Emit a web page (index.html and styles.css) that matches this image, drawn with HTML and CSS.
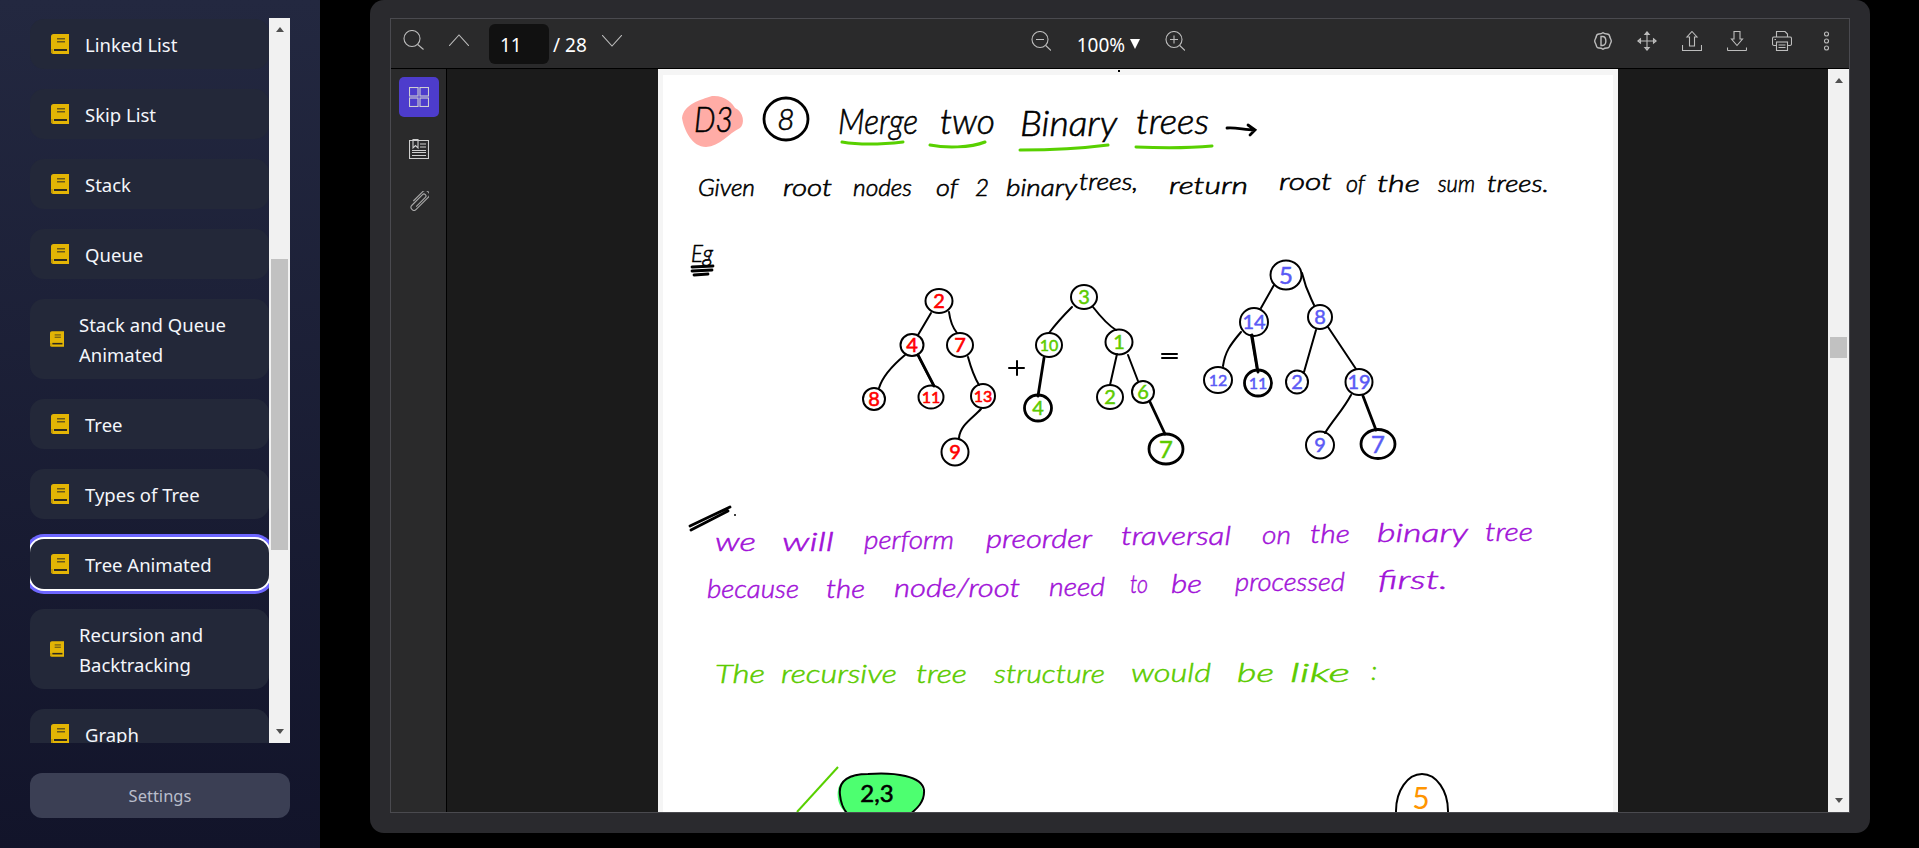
FILE: index.html
```html
<!DOCTYPE html>
<html lang="en">
<head>
<meta charset="utf-8">
<title>Notes</title>
<link rel="stylesheet" href="styles.css">
</head>
<body>
<svg class="defs" width="0" height="0" aria-hidden="true">
  <symbol id="book" viewBox="0 0 18 20">
    <path fill="#e3b505" d="M2.500 0H18V20H2.500C1 20 0 19 0 17.500V2.500C0 1 1 0 2.500 0Z"/>
    <path fill="#c49a05" d="M0 15H2V20H2.500C1 20 0 19 0 17.500Z"/>
    <rect x="6" y="4" width="8" height="1.500" fill="#6b5a1c"/>
    <rect x="6" y="7" width="8" height="1.500" fill="#6b5a1c"/>
    <rect x="3" y="15" width="13" height="2" fill="#2d2a22"/>
  </symbol>
</svg>
<aside class="sidebar">
  <div class="list-wrap">
    <nav class="topics">
      <a class="topic"><svg class="book"><use href="#book"/></svg><span>Linked List</span></a>
      <a class="topic"><svg class="book"><use href="#book"/></svg><span>Skip List</span></a>
      <a class="topic"><svg class="book"><use href="#book"/></svg><span>Stack</span></a>
      <a class="topic"><svg class="book"><use href="#book"/></svg><span>Queue</span></a>
      <a class="topic topic-long"><svg class="book"><use href="#book"/></svg><span>Stack and Queue Animated</span></a>
      <a class="topic"><svg class="book"><use href="#book"/></svg><span>Tree</span></a>
      <a class="topic"><svg class="book"><use href="#book"/></svg><span>Types of Tree</span></a>
      <a class="topic topic-active"><svg class="book"><use href="#book"/></svg><span>Tree Animated</span></a>
      <a class="topic topic-long"><svg class="book"><use href="#book"/></svg><span>Recursion and Backtracking</span></a>
      <a class="topic"><svg class="book"><use href="#book"/></svg><span>Graph</span></a>
    </nav>
    <div class="scrollbar side-scroll">
      <i class="arrow-up"></i>
      <div class="track"><div class="thumb side-thumb"></div></div>
      <i class="arrow-down"></i>
    </div>
  </div>
  <button class="settings">Settings</button>
</aside>
<main class="main">
  <section class="panel">
    <div class="pdf">
      <header class="toolbar">
        <div class="tool-group">
          <svg class="ico ico-search" viewBox="0 0 21 20"><circle cx="9" cy="8.500" r="8"/><path d="M14.700 14.500L20.500 19.500"/></svg>
          <svg class="ico ico-chev" viewBox="0 0 20 12"><path d="M0 12L10 1L20 12"/></svg>
          <div class="page-input">11</div>
          <span class="page-total">/ 28</span>
          <svg class="ico ico-chev ico-chev-down" viewBox="0 0 20 12"><path d="M0 0L10 11L20 0"/></svg>
        </div>
        <div class="tool-group zoom-group">
          <svg class="ico ico-zoom" viewBox="0 0 20 20"><circle cx="9" cy="8.500" r="8"/><path d="M14.700 14.500L20 19.500M5 8.500H13"/></svg>
          <span class="zoom-value">100%<i class="caret"></i></span>
          <svg class="ico ico-zoom" viewBox="0 0 20 20"><circle cx="9" cy="8.500" r="8"/><path d="M14.700 14.500L20 19.500M5 8.500H13M9 4.500V12.500"/></svg>
        </div>
        <div class="tool-group tools-right">
          <svg class="ico ico-mode" viewBox="0 0 18 18"><path d="M9 .7C10.500 2 11.500 2 13 2C14.500 2 15.500 3 15.700 4.500C16 6 17.300 7.500 17.300 9C17.300 10.500 16 12 15.700 13.500C15.500 15 14.500 16 13 16C11.500 16 10.500 16 9 17.300C7.500 16 6.500 16 5 16C3.500 16 2.500 15 2.300 13.500C2 12 .7 10.500 .7 9C.7 7.500 2 6 2.300 4.500C2.500 3 3.500 2 5 2C6.500 2 7.500 2 9 .7Z"/><path d="M7 4.500H8.500C13 4.500 13 13.500 8.500 13.500H7Z"/></svg>
          <svg class="ico ico-tool" viewBox="0 0 20 20"><path d="M10 1V19M1 10H19M7.800 3.500L10 .8L12.200 3.500ZM7.800 16.500L10 19.200L12.200 16.500ZM3.500 7.800L.8 10L3.500 12.200ZM16.500 7.800L19.200 10L16.500 12.200Z"/></svg>
          <svg class="ico ico-tool" viewBox="0 0 20 20"><path d="M10 .5L15 6H12.500V15H7.500V6H5Z"/><path d="M.5 14V19.500H19.500V14"/></svg>
          <svg class="ico ico-tool" viewBox="0 0 20 20"><path d="M7 .5H13V8H15.500L10 14.500L4.500 8H7Z"/><path d="M.5 19.500H19.500M.5 16.500V19.500M19.500 16.500V19.500"/></svg>
          <svg class="ico ico-tool" viewBox="0 0 20 20"><path d="M4.500 6V.5H13L15.500 3V6"/><rect x=".5" y="6" width="19" height="8.500" rx="1.500"/><rect x="4.500" y="11" width="11" height="8.500" class="ico-fill"/><path d="M6.500 14H13.500M6.500 16.500H13.500M2.500 8.500H4"/></svg>
          <svg class="ico ico-dots" viewBox="0 0 5 20"><circle cx="2.500" cy="3" r="2"/><circle cx="2.500" cy="10" r="2"/><circle cx="2.500" cy="17" r="2"/></svg>
        </div>
      </header>
      <div class="pdf-body">
        <div class="pdf-side">
          <button class="side-btn side-btn-on"><svg class="ico ico-side" viewBox="0 0 20 20"><rect x=".5" y=".5" width="8.500" height="8.500"/><rect x="11" y=".5" width="8.500" height="8.500"/><rect x=".5" y="11" width="8.500" height="8.500"/><rect x="11" y="11" width="8.500" height="8.500"/></svg></button>
          <button class="side-btn"><svg class="ico ico-side" viewBox="0 0 20 20"><path d="M.5 1.500H19.500V19.500H.5Z"/><path d="M4 .5V9L6.500 6.500L9 9V.5Z"/><path d="M11 5H17M11 8H17M3 11.500H17M3 13.500H17M3 16.500H17"/></svg></button>
          <button class="side-btn"><svg class="ico ico-side ico-clip" viewBox="0 0 20 20"><path transform="translate(10 10) rotate(45)" d="M-4 4V-9A4 4 0 0 1 4 -9V8A3 3 0 0 1 -2 8V-7A2 2 0 0 1 2 -7V6"/></svg></button>
        </div>
        <div class="viewer">
          <svg class="sheet" width="960" height="743" viewBox="658 69 960 743" role="img" aria-label="Handwritten note: merge two binary trees">
            <rect class="sheet-edge" x="658" y="69" width="960" height="743"/>
            <rect class="sheet-paper" x="663" y="75" width="950" height="737"/>
            <rect class="ink-fill" x="1118" y="70" width="2" height="2"/>

            <path class="pink" d="M682 118C684 104 700 100 712 96C725 95 733 104 735 108C744 112 745 124 740 128C728 134 720 146 706 147C692 147 684 130 682 118Z"/>
            <text class="hw ink h1" x="694" y="132" textLength="39" lengthAdjust="spacingAndGlyphs">D3</text>
            <ellipse class="pen pen-b" cx="786" cy="119" rx="22" ry="21"/>
            <text class="hw ink h2" x="786" y="130" text-anchor="middle">8</text>
            <text class="hw ink h1" x="838" y="134" textLength="80" lengthAdjust="spacingAndGlyphs">Merge</text>
            <text class="hw ink h1" x="940" y="134" textLength="55" lengthAdjust="spacingAndGlyphs">two</text>
            <text class="hw ink h1" x="1020" y="136" textLength="97" lengthAdjust="spacingAndGlyphs">Binary</text>
            <text class="hw ink h1" x="1136" y="134" textLength="73" lengthAdjust="spacingAndGlyphs">trees</text>
            <path class="pen pen-b" d="M1227 128C1235 127 1245 130 1254 130M1248 125L1255 130L1250 135"/>
            <path class="mark" d="M842 142C860 145 885 144 903 142M930 145C945 148 970 148 985 142M1020 150C1050 150 1085 148 1108 145M1136 147C1160 148 1190 148 1212 146"/>

            <g class="hw ink h3">
              <text x="698" y="196" textLength="57" lengthAdjust="spacingAndGlyphs">Given</text>
              <text x="783" y="196" textLength="49" lengthAdjust="spacingAndGlyphs">root</text>
              <text x="853" y="196" textLength="59" lengthAdjust="spacingAndGlyphs">nodes</text>
              <text x="936" y="196" textLength="22" lengthAdjust="spacingAndGlyphs">of</text>
              <text x="975" y="196" textLength="14" lengthAdjust="spacingAndGlyphs">2</text>
              <text x="1006" y="196" textLength="71" lengthAdjust="spacingAndGlyphs">binary</text>
              <text x="1079" y="190" textLength="59" lengthAdjust="spacingAndGlyphs">trees,</text>
              <text x="1169" y="194" textLength="79" lengthAdjust="spacingAndGlyphs">return</text>
              <text x="1279" y="190" textLength="53" lengthAdjust="spacingAndGlyphs">root</text>
              <text x="1346" y="192" textLength="19" lengthAdjust="spacingAndGlyphs">of</text>
              <text x="1377" y="192" textLength="43" lengthAdjust="spacingAndGlyphs">the</text>
              <text x="1438" y="192" textLength="37" lengthAdjust="spacingAndGlyphs">sum</text>
              <text x="1487" y="192" textLength="62" lengthAdjust="spacingAndGlyphs">trees.</text>
            </g>
            <text class="hw ink h3" x="691" y="262" textLength="22" lengthAdjust="spacingAndGlyphs">Eg</text>
            <path class="pen pen-b" d="M692 267L713 266M692 271L712 270M694 275L708 274"/>

            <g class="pen">
              <path d="M931 313L918 335M949 312C950 320 953 328 957 333M905 355C893 365 883 375 879 388M918 355C923 365 928 375 934 386M968 357C971 368 973 375 979 385M981 409C973 418 960 425 959 438"/>
              <ellipse cx="939" cy="301" rx="13.500" ry="12"/><ellipse cx="912" cy="345" rx="11.500" ry="11"/><ellipse cx="960" cy="345" rx="13" ry="12"/><ellipse cx="874" cy="399" rx="11" ry="11"/><ellipse cx="931" cy="397" rx="12.500" ry="11.500"/><ellipse cx="983" cy="396" rx="12" ry="12"/><ellipse cx="955" cy="452" rx="13.500" ry="13.500"/>
              <path d="M1072 307C1063 316 1055 325 1049 333M1093 307C1100 316 1108 325 1116 330M1117 354L1110 385M1128 355L1138 381"/>
              <ellipse cx="1084" cy="297" rx="13" ry="12"/><ellipse cx="1049" cy="345" rx="13" ry="12"/><ellipse cx="1119" cy="342" rx="13.500" ry="12.500"/><ellipse cx="1110" cy="397" rx="13" ry="12"/><ellipse cx="1143" cy="392" rx="11" ry="11"/>
              <path d="M1274 285L1261 308M1302 273C1306 290 1310 296 1314 305M1241 332C1230 345 1225 352 1223 366M1251 335L1257 370M1316 330L1304 372M1328 327L1356 369M1351 395C1343 410 1333 420 1325 433"/>
              <ellipse cx="1286" cy="275" rx="15.500" ry="14.500"/><ellipse cx="1254" cy="322" rx="14" ry="14"/><ellipse cx="1320" cy="317" rx="12" ry="12"/><ellipse cx="1218" cy="380" rx="14" ry="13"/><ellipse cx="1297" cy="382" rx="11" ry="11.500"/><ellipse cx="1359" cy="382" rx="13.500" ry="13"/><ellipse cx="1320" cy="445" rx="14" ry="13.500"/>
              <path d="M1009 368H1024M1017 361V375M1162 354H1177M1162 358H1177"/>
            </g>
            <g class="pen pen-b">
              <path d="M1044 358L1038 396M1150 402L1165 434M1363 396L1376 430"/>
              <ellipse cx="1038" cy="408" rx="13.500" ry="13"/><ellipse cx="1166" cy="449" rx="17" ry="15"/><ellipse cx="1258" cy="383" rx="13.500" ry="13"/><ellipse cx="1378" cy="444" rx="17" ry="14.500"/>
            </g>
            <path class="pen pen-b" d="M918 355L934 386M1252 335L1258 372"/>
            <g class="hw num red">
              <text x="939" y="308">2</text><text x="912" y="352">4</text><text x="960" y="352">7</text><text x="874" y="406">8</text><text class="num-sm" x="931" y="403">11</text><text class="num-sm" x="983" y="402">13</text><text x="955" y="459">9</text>
            </g>
            <g class="hw num lime">
              <text x="1084" y="304">3</text><text class="num-sm" x="1049" y="351">10</text><text x="1119" y="349">1</text><text x="1038" y="415">4</text><text x="1110" y="404">2</text><text x="1143" y="399">6</text><text class="num-lg" x="1166" y="458">7</text>
            </g>
            <g class="hw num blue">
              <text class="num-lg" x="1286" y="284">5</text><text x="1254" y="329">14</text><text x="1320" y="324">8</text><text class="num-sm" x="1218" y="386">12</text><text class="num-sm" x="1258" y="389">11</text><text x="1297" y="389">2</text><text x="1359" y="389">19</text><text x="1320" y="452">9</text><text class="num-lg" x="1378" y="453">7</text>
            </g>

            <path class="pen pen-b" d="M690 526L730 507M691 530L728 511"/>
            <circle class="ink-fill" cx="735" cy="515" r="1"/>

            <g class="hw purple h4">
              <text x="715" y="551" textLength="41" lengthAdjust="spacingAndGlyphs">we</text>
              <text x="782" y="551" textLength="52" lengthAdjust="spacingAndGlyphs">will</text>
              <text x="864" y="549" textLength="90" lengthAdjust="spacingAndGlyphs">perform</text>
              <text x="986" y="548" textLength="106" lengthAdjust="spacingAndGlyphs">preorder</text>
              <text x="1121" y="545" textLength="110" lengthAdjust="spacingAndGlyphs">traversal</text>
              <text x="1262" y="544" textLength="29" lengthAdjust="spacingAndGlyphs">on</text>
              <text x="1310" y="543" textLength="40" lengthAdjust="spacingAndGlyphs">the</text>
              <text x="1377" y="542" textLength="91" lengthAdjust="spacingAndGlyphs">binary</text>
              <text x="1485" y="541" textLength="48" lengthAdjust="spacingAndGlyphs">tree</text>
              <text x="707" y="598" textLength="92" lengthAdjust="spacingAndGlyphs">because</text>
              <text x="826" y="598" textLength="39" lengthAdjust="spacingAndGlyphs">the</text>
              <text x="894" y="597" textLength="126" lengthAdjust="spacingAndGlyphs">node/root</text>
              <text x="1049" y="596" textLength="56" lengthAdjust="spacingAndGlyphs">need</text>
              <text x="1130" y="593" textLength="18" lengthAdjust="spacingAndGlyphs">to</text>
              <text x="1171" y="593" textLength="31" lengthAdjust="spacingAndGlyphs">be</text>
              <text x="1235" y="591" textLength="110" lengthAdjust="spacingAndGlyphs">processed</text>
              <text x="1378" y="589" textLength="70" lengthAdjust="spacingAndGlyphs">first.</text>
            </g>
            <g class="hw lime h4">
              <text x="715" y="683" textLength="50" lengthAdjust="spacingAndGlyphs">The</text>
              <text x="781" y="683" textLength="116" lengthAdjust="spacingAndGlyphs">recursive</text>
              <text x="916" y="683" textLength="51" lengthAdjust="spacingAndGlyphs">tree</text>
              <text x="994" y="683" textLength="111" lengthAdjust="spacingAndGlyphs">structure</text>
              <text x="1131" y="682" textLength="80" lengthAdjust="spacingAndGlyphs">would</text>
              <text x="1237" y="682" textLength="37" lengthAdjust="spacingAndGlyphs">be</text>
              <text x="1290" y="682" textLength="60" lengthAdjust="spacingAndGlyphs">like</text>
              <text x="1371" y="680">:</text>
            </g>

            <path class="mark-thin" d="M838 767L797 812"/>
            <path class="mint" d="M838 790C840 778 855 774 880 774C905 772 925 780 923 795C922 806 915 815 900 815H850C842 812 836 802 838 790Z"/>
            <path class="pen" d="M840 795C838 780 850 774 868 774C895 772 922 776 924 790C925 803 915 810 908 816M840 795C841 805 845 812 850 816"/>
            <text class="hw ink h3 upright" x="877" y="802" text-anchor="middle">2,3</text>
            <ellipse class="pen" cx="1422" cy="811" rx="26" ry="37"/>
            <text class="hw orange h2 upright" x="1421" y="809" text-anchor="middle">5</text>
          </svg>
        </div>
        <div class="scrollbar pdf-scroll">
          <i class="arrow-up"></i>
          <div class="track"><div class="thumb pdf-thumb"></div></div>
          <i class="arrow-down"></i>
        </div>
      </div>
    </div>
  </section>
</main>
</body>
</html>
```

FILE: styles.css
```css
* { box-sizing: border-box; }
html, body { margin: 0; height: 848px; overflow: hidden; }
body {
  display: flex;
  background: #000;
  font-family: "Noto Sans", "Open Sans", sans-serif;
  color: #fff;
}
.defs { position: absolute; }

/* left column */
.sidebar {
  width: 320px;
  flex: none;
  display: flex;
  flex-direction: column;
  padding: 18px 30px 0;
  background: linear-gradient(180deg, #232840 0%, #12142a 100%);
}
.list-wrap { display: flex; height: 725px; }
.topics {
  width: 239px;
  flex: none;
  padding-top: 1px;
  display: flex;
  flex-direction: column;
  gap: 20px;
  overflow: hidden;
}
.topic {
  flex: none;
  display: flex;
  align-items: center;
  gap: 15px;
  min-height: 50px;
  padding: 11px 20px 9px;
  border-radius: 14px;
  background: #232839;
  font-size: 18.500px;
  line-height: 30px;
  color: #f4f6fb;
}
.book { width: 20px; height: 20px; flex: none; margin-top: -2px; }
.topic-long .book { width: 14px; height: 16px; }
.topic-active { box-shadow: 0 0 0 2px #fff, 0 0 0 5px #6d66ff; }
.settings {
  margin-top: 30px;
  height: 45px;
  width: 260px;
  border: 0;
  border-radius: 12px;
  background: #3b3f54;
  color: #b9bdcb;
  font: 16.500px "Noto Sans", "Open Sans", sans-serif;
}

/* scrollbars */
.scrollbar {
  width: 21px;
  flex: none;
  display: flex;
  flex-direction: column;
  align-items: center;
  background: #f1f1f1;
}
.track { flex: 1; width: 100%; padding: 0 2px; }
.thumb { background: #c1c1c1; }
.arrow-up, .arrow-down {
  flex: none;
  width: 0;
  height: 0;
  border-left: 4.500px solid transparent;
  border-right: 4.500px solid transparent;
}
.arrow-up { margin: 9px 0; border-bottom: 5px solid #505050; }
.arrow-down { margin: 9px 0; border-top: 5px solid #505050; }
.side-thumb { height: 291px; margin-top: 218px; }
.pdf-thumb { height: 21px; margin-top: 245px; }

/* viewer shell */
.main { flex: 1; padding: 0 49px 15px 50px; display: flex; }
.panel {
  flex: 1;
  padding: 18px 20px 20px;
  background: #2a2a2e;
  border-radius: 14px;
  display: flex;
}
.pdf {
  flex: 1;
  display: flex;
  flex-direction: column;
  border: 1px solid #4a4a4f;
  min-width: 0;
}
.toolbar {
  flex: none;
  height: 50px;
  display: flex;
  align-items: center;
  justify-content: space-between;
  background: #2a2a2b;
  border-bottom: 1px solid #000;
  padding: 0 20px 0 12px;
}
.tool-group { display: flex; align-items: center; }
.ico { fill: none; stroke: #bdbdbd; stroke-width: 1.100; flex: none; display: block; }
.ico-fill { fill: #2a2a2b; }
.ico-search { width: 21px; height: 20px; margin-right: 25px; margin-top: -8px; }
.ico-chev { width: 20px; height: 12px; margin-top: -8px; }
.ico-chev-down { margin-left: 15px; margin-top: -6px; }
.page-input {
  width: 60px;
  height: 40px;
  margin: 0 4px 0 20px;
  padding-left: 11px;
  border-radius: 6px;
  background: #111;
  font-size: 19px;
  line-height: 42px;
}
.page-total { font-size: 19px; line-height: 24px; margin-top: 3px; }
.zoom-group { margin-left: 0; }
.ico-zoom { width: 20px; height: 20px; margin-top: -5px; }
.zoom-value {
  display: flex;
  align-items: center;
  margin: 3px 25px 0 26px;
  font-size: 19px;
  line-height: 24px;
}
.caret {
  width: 0;
  height: 0;
  margin: -3px 0 0 5px;
  border-left: 5px solid transparent;
  border-right: 5px solid transparent;
  border-top: 10px solid #fff;
}
.tools-right { gap: 25px; margin-top: -6px; }
.ico-mode { width: 18px; height: 18px; stroke-width: 1.400; }
.ico-tool { width: 20px; height: 20px; }
.ico-dots { width: 5px; height: 20px; margin-left: 7px; }
.pdf-body { flex: 1; display: flex; min-height: 0; }
.pdf-side {
  width: 56px;
  flex: none;
  padding: 8px 0 0 8px;
  display: flex;
  flex-direction: column;
  gap: 12px;
  background: #2a2a2b;
  border-right: 1px solid #000;
}
.side-btn {
  width: 40px;
  height: 40px;
  padding: 0;
  border: 0;
  border-radius: 5px;
  background: transparent;
  display: flex;
  align-items: center;
  justify-content: center;
}
.side-btn-on { background: #4d3ccc; }
.ico-side { width: 20px; height: 20px; stroke: #cfcfcf; }
.ico-clip { stroke: #a8a8a8; }
.viewer {
  flex: 1;
  min-width: 0;
  display: flex;
  justify-content: center;
  overflow: hidden;
  background: #1b1b1b;
}
.sheet { display: block; flex: none; }

/* the handwritten page */
.sheet-edge { fill: #f5f5f5; }
.sheet-paper { fill: #fff; }
.ink-fill { fill: #000; }
.pink { fill: #ffaca6; }
.mint { fill: #4dff70; }
.pen { fill: none; stroke: #000; stroke-width: 2; stroke-linecap: round; }
.pen-b { stroke-width: 2.800; }
.mark { fill: none; stroke: #58d000; stroke-width: 3; stroke-linecap: round; }
.mark-thin { fill: none; stroke: #58d000; stroke-width: 2; }
.hw { font-family: "Lato", "Open Sans", sans-serif; font-style: italic; font-weight: 300; }
.upright { font-style: normal; font-weight: 400; }
.ink { fill: #000; stroke: #000; stroke-width: .6; }
.purple { fill: #a112d8; stroke: #a112d8; stroke-width: .5; }
.lime { fill: #5ccb00; stroke: #5ccb00; stroke-width: .5; }
.red { fill: #f00; stroke: #f00; stroke-width: .6; }
.blue { fill: #5a5af5; stroke: #5a5af5; stroke-width: .5; }
.orange { fill: #ff9500; }
.h1 { font-size: 36px; }
.h2 { font-size: 30px; }
.h3 { font-size: 24px; }
.h4 { font-size: 26px; }
.num { font-size: 20px; text-anchor: middle; font-style: normal; font-weight: 400; }
.num-sm { font-size: 16px; }
.num-lg { font-size: 24px; }
```
